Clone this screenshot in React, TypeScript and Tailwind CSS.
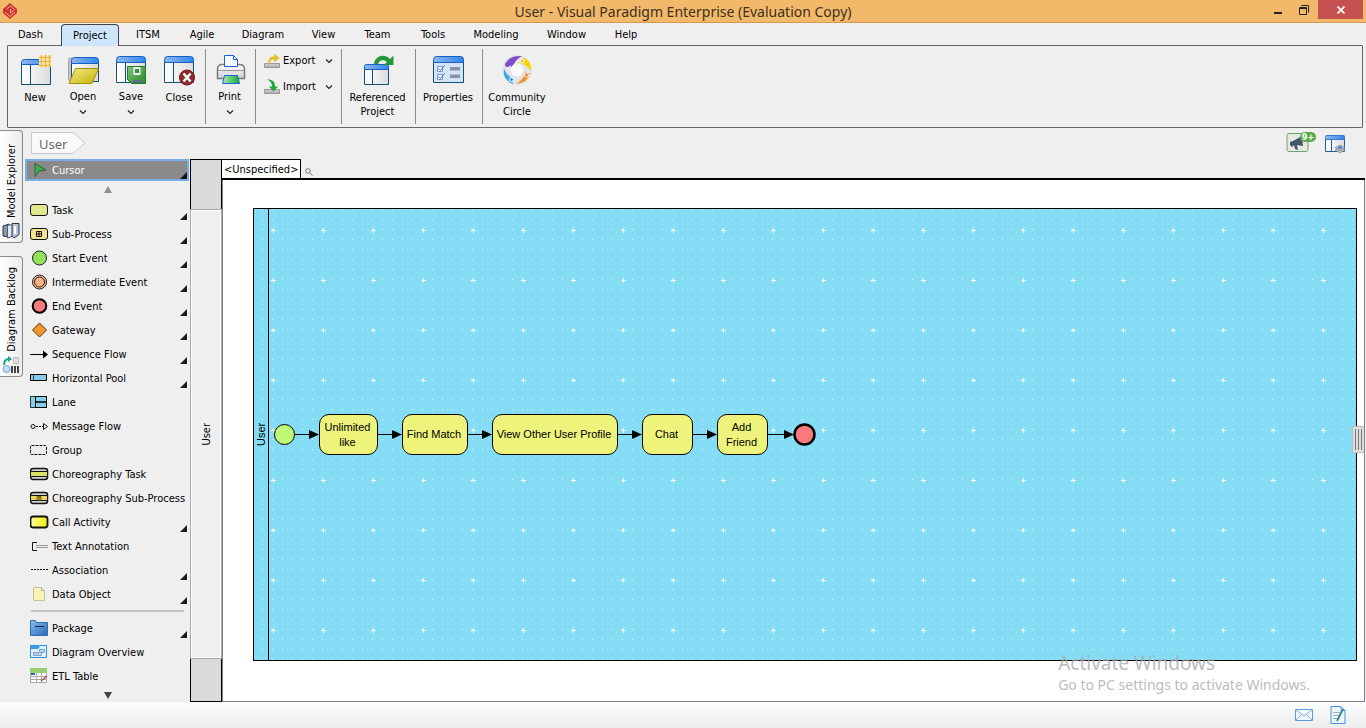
import type { ReactNode } from "react";

/* ---------- shared gradients ---------- */

function Gradients() {
  return (
    <svg className="absolute size-0" aria-hidden="true">
      <defs>
        <linearGradient id="bar" x1="0" x2="1" y1="0" y2="0">
          <stop offset="0" stopColor="#8fb8ee" />
          <stop offset="1" stopColor="#2f86ea" />
        </linearGradient>
        <linearGradient id="pane" x1="0" x2="1" y1="0" y2="0">
          <stop offset="0" stopColor="#ffffff" />
          <stop offset="1" stopColor="#dcdcdc" />
        </linearGradient>
        <linearGradient id="folder" x1="0" x2="1" y1="0" y2="1">
          <stop offset="0" stopColor="#f3e88c" />
          <stop offset="1" stopColor="#c9b400" />
        </linearGradient>
        <linearGradient id="green" x1="0" x2="1" y1="0" y2="0">
          <stop offset="0" stopColor="#a9e3b4" />
          <stop offset="1" stopColor="#12b32d" />
        </linearGradient>
        <linearGradient id="disk" x1="0" x2="1" y1="0" y2="1">
          <stop offset="0" stopColor="#7cc47a" />
          <stop offset="1" stopColor="#2c8a2c" />
        </linearGradient>
        <linearGradient id="tray" x1="0" x2="0" y1="0" y2="1">
          <stop offset="0" stopColor="#d6d6d6" />
          <stop offset="1" stopColor="#a8a8a8" />
        </linearGradient>
        <linearGradient id="blueBox" x1="0" x2="1" y1="0" y2="1">
          <stop offset="0" stopColor="#8cc0ee" />
          <stop offset="1" stopColor="#2566b4" />
        </linearGradient>
        <linearGradient id="call" x1="0" x2="1" y1="0" y2="0">
          <stop offset="0" stopColor="#f8fba0" />
          <stop offset="1" stopColor="#f2f200" />
        </linearGradient>
        <linearGradient id="chrome" x1="0" x2="0" y1="0" y2="1">
          <stop offset="0" stopColor="#ffffff" />
          <stop offset="1" stopColor="#d0d0d0" />
        </linearGradient>
      </defs>
    </svg>
  );
}

/* ---------- ribbon icons ---------- */

function Big({ children }: { children: ReactNode }) {
  return (
    <svg viewBox="0 0 32 32" className="size-8 shrink-0" fill="none" aria-hidden="true">
      {children}
    </svg>
  );
}

function WindowFrame() {
  return (
    <>
      <path d="M1.500 8.500h29v20h-29z" fill="url(#pane)" stroke="#135070" />
      <path d="M10.500 9v19" stroke="#135070" />
      <path d="M1.500 8.500v-3q0-3 3-3h23q3 0 3 3v3z" fill="url(#bar)" stroke="#1a5fc4" />
    </>
  );
}

const NewIcon = () => (
  <Big>
    <path d="M2.500 10.500h29v20h-29z" fill="url(#pane)" stroke="#135070" />
    <path d="M11.500 11v19" stroke="#135070" />
    <path d="M2.500 10.500v-2q0-3 3-3h26v5z" fill="url(#bar)" stroke="#1a5fc4" />
    <path d="M20 1h12v12h-12z" fill="#fdf3cf" />
    <path d="M20 3.500h12M20 7.500h12M20 11.500h12M22.500 1v12M26.500 1v12M30.500 1v12" stroke="#eeb53a" strokeWidth="1.500" />
  </Big>
);

const OpenIcon = () => (
  <Big>
    <path d="M1.500 26v-21q0-1 2-1h1v23z" fill="#c4c4c4" stroke="#a4a4a4" />
    <path d="M4.500 9.500h27v18h-27z" fill="url(#pane)" stroke="#135070" />
    <path d="M4.500 9.500v-3q0-3 3-3h21q3 0 3 3v3z" fill="url(#bar)" stroke="#1a5fc4" />
    <path d="M8.500 14.500h23l-6.500 15h-23z" fill="url(#folder)" stroke="#a39200" />
  </Big>
);

const SaveIcon = () => (
  <Big>
    <WindowFrame />
    <path d="M12.500 12.500h18v17h-14l-4-4z" fill="url(#disk)" stroke="#1c7d25" />
    <path d="M18.500 13h7v8h-7z" fill="#f4f4f4" />
    <path d="M20 15h4v4h-4z" fill="#3a8f3d" />
    <path d="M18 26h9v3h-9z" fill="#5c6f80" />
  </Big>
);

const CloseIcon = () => (
  <Big>
    <WindowFrame />
    <circle cx="24" cy="23.500" r="7.500" fill="#8b2b2b" stroke="#6d1519" />
    <path d="M20.500 19.500l7 8M27.500 19.500l-7 8" stroke="#fff" strokeWidth="2.500" />
  </Big>
);

const PrintIcon = () => (
  <Big>
    <path d="M3.500 24.500v-9q0-5 5-5h17q5 0 5 5v9z" fill="url(#chrome)" stroke="#7a7a7a" strokeWidth="1.500" />
    <path d="M10.500 12.500v-11h9l4 4v7z" fill="#f7fbff" stroke="#1d62d8" />
    <path d="M19.500 1.500v4h4" stroke="#1d62d8" />
    <path d="M4 16.500h26" stroke="#9a9a9a" />
    <path d="M9 17h16v4h-16z" fill="#e2e2e2" />
    <path d="M10.500 21.500h13l2 8h-17z" fill="url(#green)" stroke="#1d62d8" />
  </Big>
);

const ReferencedIcon = () => (
  <Big>
    <path d="M2.500 15.500h24v15h-24z" fill="url(#pane)" stroke="#135070" />
    <path d="M10.500 15v15" stroke="#135070" />
    <path d="M2.500 15.500v-3q0-2 2-2h20q2 0 2 2v3z" fill="url(#bar)" stroke="#1a5fc4" />
    <path d="M12 10c1-8 10-11 16-5l3.500-3.500v9.500h-10l3.500-3c-4-3-8-2-9 2.500z" fill="#27983a" />
  </Big>
);

const PropertiesIcon = () => (
  <Big>
    <path d="M1.500 8.500h30v20h-30z" fill="#d5e3f6" stroke="#135070" />
    <path d="M1.500 8.500v-3q0-3 3-3h24q3 0 3 3v3z" fill="url(#bar)" stroke="#1a5fc4" />
    <path d="M5.500 12.500h5v5h-5zM5.500 20.500h5v5h-5z" fill="#fff" stroke="#6f9be0" />
    <path d="M6.500 14.500l2 2 4-5M6.500 22.500l2 2 4-5" stroke="#3f72cc" />
    <path d="M18 13h10v3.500h-10zM18 20.500h10v3.500h-10z" fill="#8a92a6" />
  </Big>
);

const CommunityIcon = () => (
  <Big>
    <circle cx="16" cy="16" r="15" fill="#e3e3e8" />
    <path d="M5 9q4-8 16-7-8 4-10 13-1-5-6-6z" fill="#7e4fc8" />
    <path d="M22 3q9 4 8 14-5-7-12-8 5-1 4-6z" fill="#f7d404" />
    <path d="M29 19q-2 10-14 11 9-5 9-13 1 3 5 2z" fill="#ee9128" />
    <path d="M3 15q-2 10 9 15-1-2 1-5-6-2-10-10z" fill="#3aa9e6" />
    <circle cx="16" cy="16" r="6.500" fill="#fafafa" />
    <circle cx="6.500" cy="10.500" r="2.500" fill="#7e4fc8" />
    <circle cx="21" cy="7" r="2" fill="#e8b53a" stroke="#fff" />
    <circle cx="25.500" cy="21" r="2" fill="#e87a1c" stroke="#fff" />
    <circle cx="10.500" cy="25.500" r="2" fill="#2f8fe0" stroke="#fff" />
  </Big>
);

const ExportIcon = () => (
  <svg viewBox="0 0 16 16" className="size-4" aria-hidden="true">
    <path d="M.5 10.500h15v4h-15z" fill="url(#tray)" stroke="#999" />
    <path d="M4 11c0-5 2-7.500 6-7.500v-3l5.500 4.500-5.500 4.500v-3c-3 0-4 1-4 4.500z" fill="#e3c22e" />
  </svg>
);

const ImportIcon = () => (
  <svg viewBox="0 0 16 16" className="size-4" aria-hidden="true">
    <path d="M.5 10.500h15v4h-15z" fill="url(#tray)" stroke="#999" />
    <path d="M3 .5c6 0 8 2 8 7h3l-4.500 5-4.500-5h3c0-3-1-5-5-7z" fill="#22a53a" />
  </svg>
);

const Chevron = () => (
  <svg viewBox="0 0 8 6" className="h-1.5 w-2" fill="none" aria-hidden="true">
    <path d="M1 1.500l3 3 3-3" stroke="#222" strokeWidth="1.200" />
  </svg>
);

function RibbonButton({ icon, label, menu, className }: { icon: ReactNode; label: string; menu?: boolean; className: string }) {
  return (
    <button type="button" className={`flex shrink-0 flex-col items-center pt-2 text-center leading-[14px] ${className}`}>
      {icon}
      <span className={menu ? "mt-1" : "mt-[5px]"}>{label}</span>
      {menu && <span className="mt-[5px]"><Chevron /></span>}
    </button>
  );
}

function Divider() {
  return <div className="my-[3px] w-px shrink-0 bg-[#8c8c8c]" />;
}

/* ---------- palette icons (20 x 16) ---------- */

function Small({ children }: { children: ReactNode }) {
  return (
    <svg viewBox="0 0 20 16" className="h-4 w-5 shrink-0" fill="none" aria-hidden="true">
      {children}
    </svg>
  );
}

const PlainBox = ({ fill, width = 1 }: { fill: string; width?: number }) => (
  <rect x=".5" y="2.500" width="17" height="11" rx="2.500" fill={fill} stroke="#111" strokeWidth={width} />
);

const paletteIcons: Record<string, ReactNode> = {
  Task: <PlainBox fill="#e2e68c" />,
  "Sub-Process": <><PlainBox fill="#f5e48c" /><path d="M6.500 5.500h5v5h-5zM9 5.500v5M6.500 8h5" stroke="#111" /></>,
  "Start Event": <circle cx="9.500" cy="8" r="7" fill="#92e35b" stroke="#222" />,
  "Intermediate Event": <><circle cx="9.500" cy="8" r="7" fill="#f8b486" stroke="#222" /><circle cx="9.500" cy="8" r="5" stroke="#222" /></>,
  "End Event": <circle cx="9.500" cy="8" r="6.800" fill="#f47c7c" stroke="#000" strokeWidth="2" />,
  Gateway: <path d="M9.500 1l7 7-7 7-7-7z" fill="#f5952a" stroke="#553311" />,
  "Sequence Flow": <><path d="M0 8.500h14" stroke="#000" /><path d="M13 4.500l5 4-5 4z" fill="#000" /></>,
  "Horizontal Pool": <><path d="M.5 4.500h16v6h-16z" fill="#86cde8" stroke="#000" /><path d="M3.500 5v5" stroke="#345" /></>,
  Lane: <><path d="M.5 2.500h16v11h-16z" fill="#86cde8" stroke="#234" /><path d="M5.500 2.500h11v5.500h-11zM5.500 8h11v5.500h-11z" stroke="#000" /></>,
  "Message Flow": <><circle cx="3" cy="8.500" r="2" stroke="#111" /><path d="M6 8.500h7" stroke="#111" strokeDasharray="2 1" /><path d="M13.500 5.500l4 3-4 3z" fill="#fff" stroke="#111" /></>,
  Group: <rect x=".5" y="3.500" width="16" height="9" rx="1" fill="#ededed" stroke="#111" strokeDasharray="3 1" />,
  "Choreography Task": <><PlainBox fill="#d0d0d0" width={1.5} /><path d="M.5 5.500h17v5h-17z" fill="#d7e35e" stroke="#111" /></>,
  "Choreography Sub-Process": <><PlainBox fill="#d0d0d0" width={1.5} /><path d="M.5 5.500h17v5h-17z" fill="#f0d35c" stroke="#111" /><path d="M7 6.500h4v3.500h-4zM9 6.500v3.500M7 8h4" stroke="#7a6410" /></>,
  "Call Activity": <PlainBox fill="url(#call)" width={1.8} />,
  "Text Annotation": <><path d="M7 4.500h-4.500v8h4.500" stroke="#111" /><path d="M6 7.500h12M6 9.500h12" stroke="#999" /></>,
  Association: <path d="M1 7.500h17" stroke="#111" strokeDasharray="2 1" />,
  "Data Object": <><path d="M3.500 1.500h8l3 3v10h-11z" fill="#f9f2b0" stroke="#c2bfa5" /><path d="M11.500 1.500v3h3" fill="#fff" stroke="#aaa" /></>,
  Package: <><path d="M.5 15.500v-15h5l1 2h11v13z" fill="url(#blueBox)" stroke="#2c6fb0" /><path d="M5 6.500h9" stroke="#0c2548" /></>,
  "Diagram Overview": <><path d="M.5 1.500h16v12h-16z" fill="#e4f1fc" stroke="#2f8ee0" /><path d="M1 2h7l2 1-2 2h-7z" fill="#3a9bec" /><path d="M9.500 5.500h5v3h-5zM3.500 8.500h5v3h-5zM11.500 8.500v3h-3" fill="#b7d5ef" stroke="#7ba4cc" /></>,
  "ETL Table": <><path d="M.5 3.500h16v11h-16z" fill="#fff" stroke="#aaa" /><path d="M0 0h17v5h-17z" fill="#98cd74" /><path d="M1 8.500h15M1 11.500h15M6.500 5v10M11.500 5v10" stroke="#aaa" /><path d="M1 5h4v2h-4z" fill="#2565b0" /><path d="M11 13l6-5" stroke="#b34a4a" strokeWidth="1.300" /></>,
};

const Corner = () => (
  <svg viewBox="0 0 7 7" className="mb-0.5 mr-[3px] size-[7px] shrink-0 self-end" aria-hidden="true">
    <path d="M7 0v7H0z" fill="#1c1c1c" />
  </svg>
);

function PaletteItem({ name, menu }: { name: string; menu?: boolean }) {
  return (
    <button type="button" className="flex h-6 w-full shrink-0 items-center pl-[5px] text-left">
      <Small>{paletteIcons[name]}</Small>
      <span className="flex-1 whitespace-nowrap pl-0.5 pt-0.5">{name}</span>
      {menu && <Corner />}
    </button>
  );
}

const notations: [string, boolean][] = [
  ["Task", true],
  ["Sub-Process", true],
  ["Start Event", true],
  ["Intermediate Event", true],
  ["End Event", true],
  ["Gateway", true],
  ["Sequence Flow", true],
  ["Horizontal Pool", true],
  ["Lane", false],
  ["Message Flow", false],
  ["Group", false],
  ["Choreography Task", false],
  ["Choreography Sub-Process", false],
  ["Call Activity", true],
  ["Text Annotation", false],
  ["Association", true],
  ["Data Object", true],
];

const commons: [string, boolean][] = [
  ["Package", true],
  ["Diagram Overview", false],
  ["ETL Table", false],
];

/* ---------- window sections ---------- */

function TitleBar() {
  return (
    <header className="flex h-[23px] shrink-0 items-center border-b border-[#d29a55] bg-[#f3b96b]">
      <div className="w-28 pl-[3px]">
        <svg viewBox="0 0 14 16" className="h-4 w-3.5" aria-hidden="true">
          <path d="M7 0l7 6v4l-7 6-7-6v-4z" fill="#cf3333" />
          <path d="M3.500 6l4-3 4 3.500-4 3.500v-4M2 9l5 4.500 5-4.500" fill="none" stroke="#efb07a" />
        </svg>
      </div>
      <h1 className="flex-1 pt-px text-center font-['Noto_Sans',sans-serif] text-sm text-[#3c3020]">
        User - Visual Paradigm Enterprise (Evaluation Copy)
      </h1>
      <div className="flex w-28 items-start justify-end self-start">
        <button type="button" aria-label="Minimize" className="flex h-[19px] w-6 items-center justify-center">
          <svg viewBox="0 0 8 8" className="size-2"><path d="M0 6h8v2H0z" fill="#222" /></svg>
        </button>
        <button type="button" aria-label="Restore" className="flex h-[19px] w-7 items-center justify-center">
          <svg viewBox="0 0 10 10" className="size-2.5" fill="none" stroke="#222">
            <path d="M.5 2.500h7v7h-7zM0 3.500h8M2.500 .5h7v7" />
          </svg>
        </button>
        <button type="button" aria-label="Close" className="mr-[3px] flex h-[19px] w-[45px] items-center justify-center bg-[#c75050]">
          <svg viewBox="0 0 8 8" className="size-2"><path d="M.5 .5l7 7M7.500 .5l-7 7" stroke="#fff" strokeWidth="1.700" /></svg>
        </button>
      </div>
    </header>
  );
}

const tabs: [string, string][] = [
  ["Dash", "w-[61px]"],
  ["Project", "w-[58px]"],
  ["ITSM", "w-[58px]"],
  ["Agile", "w-[50px]"],
  ["Diagram", "w-[72px]"],
  ["View", "w-[49px]"],
  ["Team", "w-[59px]"],
  ["Tools", "w-[52px]"],
  ["Modeling", "w-[74px]"],
  ["Window", "w-[67px]"],
  ["Help", "w-[52px]"],
];

function Ribbon() {
  return (
    <>
      <nav className="flex h-[22px] shrink-0 items-end">
        {tabs.map(([name, width]) => (
          <button
            key={name}
            type="button"
            className={`${width} shrink-0 ${
              name === "Project"
                ? "relative -mb-px h-[22px] rounded-t-sm border border-b-0 border-[#444] bg-[#cfe5fc]"
                : "h-[21px]"
            }`}
          >
            {name}
          </button>
        ))}
      </nav>
      <section className="ml-[7px] mr-[3px] flex h-[83px] shrink-0 rounded-[1px] border border-[#666] pl-[3px]">
        <RibbonButton className="w-12" icon={<NewIcon />} label="New" />
        <RibbonButton className="w-12" icon={<OpenIcon />} label="Open" menu />
        <RibbonButton className="w-12" icon={<SaveIcon />} label="Save" menu />
        <RibbonButton className="mr-0.5 w-12" icon={<CloseIcon />} label="Close" />
        <Divider />
        <RibbonButton className="mr-0.5 w-[47px]" icon={<PrintIcon />} label="Print" menu />
        <Divider />
        <div className="flex w-[85px] shrink-0 flex-col px-2 pt-0.5">
          <button type="button" className="flex h-[26px] items-center gap-[3px]">
            <ExportIcon />
            <span className="flex-1 text-left">Export</span>
            <Chevron />
          </button>
          <button type="button" className="flex h-[26px] items-center gap-[3px]">
            <ImportIcon />
            <span className="flex-1 text-left">Import</span>
            <Chevron />
          </button>
        </div>
        <Divider />
        <RibbonButton className="mr-0.5 w-[71px]" icon={<ReferencedIcon />} label="Referenced Project" />
        <Divider />
        <RibbonButton className="mr-0.5 w-16" icon={<PropertiesIcon />} label="Properties" />
        <Divider />
        <RibbonButton className="w-[68px]" icon={<CommunityIcon />} label="Community Circle" />
      </section>
    </>
  );
}

function SideTab({ label, icon, className }: { label: string; icon: ReactNode; className: string }) {
  return (
    <button
      type="button"
      className={`flex w-[23px] flex-col items-center justify-end gap-1 rounded-r border border-l-0 border-[#888] bg-linear-to-r from-white to-[#ececec] pb-0.5 ${className}`}
    >
      <span className="rotate-180 whitespace-nowrap pr-0.5 [writing-mode:vertical-rl]">{label}</span>
      {icon}
    </button>
  );
}

function SideTabs() {
  return (
    <aside className="flex w-[25px] shrink-0 flex-col gap-[13px] pt-0.5">
      <SideTab
        label="Model Explorer"
        className="h-[113px]"
        icon={
          <svg viewBox="0 0 18 18" className="size-[18px]" fill="none">
            <path d="M1 4l6-2v13l-6-1z" fill="#8c98a6" stroke="#2c3540" />
            <path d="M5.500 3h6v11l-6 2z" fill="#dfe8f2" stroke="#4c5e70" />
            <path d="M10 1.500h7v11l-5 3.500-2-2z" fill="#b6c6d8" stroke="#2c3540" />
            <path d="M13 4v8" stroke="#fff" strokeWidth="2" />
          </svg>
        }
      />
      <SideTab
        label="Diagram Backlog"
        className="h-[121px]"
        icon={
          <svg viewBox="0 0 18 18" className="size-[18px]" fill="none">
            <path d="M2 9q0-6 5-6" stroke="#20a08a" strokeWidth="2" />
            <path d="M6 0l4 3-4 3z" fill="#20a08a" />
            <circle cx="4.500" cy="13" r="3.500" fill="#c2dcf5" stroke="#7aa2cf" />
            <path d="M11.500 1.500h5v6h-5zM14 1.500v6" stroke="#bbb" />
            <path d="M9 10h2v7h-2zM12 10h2v7h-2zM15 10h2v7h-2z" fill="#444" />
          </svg>
        }
      />
    </aside>
  );
}

function Breadcrumb() {
  return (
    <div className="flex h-[31px] shrink-0 items-start justify-between pl-1.5 pr-5 pt-1">
      <a href="#user" className="flex h-[22px] font-['Noto_Sans',sans-serif] text-[13px] leading-[22px] text-[#6a6a6a]">
        <span className="border border-r-0 border-[#c6cbd2] bg-[#fafafa] pl-[7px] pr-1.5">User</span>
        <svg viewBox="0 0 13 22" className="h-[22px] w-[13px]" aria-hidden="true">
          <path d="M0 .5l12 10.500-12 10.500" fill="#fafafa" stroke="#c6cbd2" />
        </svg>
      </a>
      <div className="flex gap-2">
        <button type="button" aria-label="News" className="relative h-[22px] w-[30px]">
          <svg viewBox="0 0 30 22" className="h-[22px] w-[30px]" fill="none">
            <rect x="1" y="1.500" width="21" height="18" rx="2" fill="#e6e8e6" stroke="#6fa56b" />
            <path d="M4 10l3-1 9-5 1 10-6-1 1 5-3-1-1-4-2 2-2-2z" fill="#475569" />
            <rect x="14" y="0" width="16" height="10" rx="5" fill="#57ab4c" />
          </svg>
          <span className="absolute right-0 top-0 w-4 text-center text-[9px] font-bold leading-[10px] text-white">9+</span>
        </button>
        <button type="button" aria-label="Switch diagram" className="h-[22px] w-[22px]">
          <svg viewBox="0 0 22 22" className="size-[22px]" fill="none">
            <path d="M1.500 7.500h19v12h-19z" fill="url(#pane)" stroke="#1d5f94" />
            <path d="M7.500 8v11" stroke="#1d5f94" />
            <path d="M1.500 7.500v-3q0-1 1-1h17q1 0 1 1v3z" fill="url(#bar)" stroke="#3a77cc" />
            <path d="M11 18l5-2.500 5 2.500-5 3z" fill="#bbb" stroke="#888" strokeWidth=".7" />
            <path d="M11 15.500l5-2.500 5 2.500-5 3z" fill="#b9c4d4" stroke="#888" strokeWidth=".7" />
            <path d="M14 14.500h4v2h-4z" fill="#3f78d8" />
          </svg>
        </button>
      </div>
    </div>
  );
}

function Palette() {
  return (
    <div className="flex w-[165px] shrink-0 flex-col">
      <button type="button" className="flex h-[22px] w-[164px] shrink-0 items-center border-2 border-[#78aee6] bg-[#8a8a8a] pl-[3px] text-white">
        <Small>
          <path d="M5 1.500l11 6.500-7 1-4 5.500z" fill="#35b24a" stroke="#3a5a3c" />
        </Small>
        <span className="flex-1 pl-0.5 pt-0.5 text-left">Cursor</span>
        <svg viewBox="0 0 7 7" className="size-[7px] self-end"><path d="M7 0v7H0z" fill="#111" /></svg>
      </button>
      <button type="button" aria-label="Scroll up" className="flex h-[17px] shrink-0 items-center justify-center">
        <svg viewBox="0 0 8 7" className="h-[7px] w-2"><path d="M4 0l4 7H0z" fill="#8f8f8f" /></svg>
      </button>
      {notations.map(([name, menu]) => <PaletteItem key={name} name={name} menu={menu} />)}
      <hr className="mx-1.5 my-1 h-0.5 shrink-0 border-0 bg-[#c6c6c6]" />
      {commons.map(([name, menu]) => <PaletteItem key={name} name={name} menu={menu} />)}
      <button type="button" aria-label="Scroll down" className="flex h-3.5 shrink-0 items-center justify-center">
        <svg viewBox="0 0 8 7" className="h-[7px] w-2"><path d="M4 7l4-7H0z" fill="#444" /></svg>
      </button>
    </div>
  );
}

function LaneStrip() {
  return (
    <div className="flex w-8 shrink-0 flex-col">
      <div className="h-[50px] shrink-0 border border-b-0 border-black bg-[#dadada]" />
      <div className="flex flex-1 items-center justify-center border border-[#a8a8a8] pl-0.5 outline-1 -outline-offset-2 outline-white">
        <span className="rotate-180 [writing-mode:vertical-rl]">User</span>
      </div>
      <div className="h-[43px] shrink-0 border border-t-0 border-black bg-[#dadada]" />
    </div>
  );
}

/* Node boxes and connectors, measured from the pool's inner corner. */
const nodes: { text: string; box: string }[] = [
  { text: "Unlimited like", box: "left-[65px] w-[59px]" },
  { text: "Find Match", box: "left-[148px] w-[66px]" },
  { text: "View Other User Profile", box: "left-[238px] w-[126px]" },
  { text: "Chat", box: "left-[388px] w-[51px]" },
  { text: "Add Friend", box: "left-[463px] w-[51px]" },
];

const flows: [number, number][] = [
  [41, 65],
  [124, 148],
  [214, 238],
  [364, 388],
  [439, 463],
  [514, 540],
];

function Pool() {
  return (
    <div className="relative flex-1 border border-black bg-[#85dcf5]">
      <svg className="absolute inset-0 size-full" aria-hidden="true">
        <defs>
          <pattern id="dots" x="8" y="0" width="10" height="10" patternUnits="userSpaceOnUse">
            <path d="M0 0h1v1h-1z" fill="#e0f7fe" />
          </pattern>
          <pattern id="marks" x="17" y="19" width="50" height="50" patternUnits="userSpaceOnUse">
            <path d="M2 0h1v5h-1zM0 2h5v1h-5z" fill="#f2fcff" />
          </pattern>
        </defs>
        <rect width="100%" height="100%" fill="url(#dots)" />
        <rect x="15" y="1" width="100%" height="100%" fill="url(#marks)" />
        <path d="M14.500 0v2000" stroke="#000" />
        {flows.map(([from, to]) => (
          <g key={from}>
            <path d={`M${from} 225.500H${to - 8}`} stroke="#000" />
            <path d={`M${to - 10} 221l10 4.500-10 4.500z`} fill="#000" />
          </g>
        ))}
        <circle cx="30.500" cy="225.500" r="10" fill="#c1f777" stroke="#000" />
        <circle cx="550.500" cy="225.500" r="10" fill="#f87a7a" stroke="#000" strokeWidth="2.500" />
      </svg>
      <span className="absolute left-0 top-[211px] h-[28px] w-[15px] rotate-180 text-center font-['Liberation_Sans',sans-serif] leading-[15px] [writing-mode:vertical-rl]">
        User
      </span>
      {nodes.map(({ text, box }) => (
        <div
          key={text}
          className={`absolute top-[205px] flex h-[41px] items-center justify-center rounded-[10px] border border-black bg-[#eef47b] pl-[3px] pr-[5px] text-center font-['Liberation_Sans',sans-serif] leading-[15px] ${box}`}
        >
          {text}
        </div>
      ))}
    </div>
  );
}

function Editor() {
  return (
    <main className="flex min-w-0 flex-1 flex-col pr-px">
      <div className="flex h-[21px] shrink-0 items-stretch border-b-2 border-black">
        <button type="button" className="border-r border-t border-black bg-white px-0.5 pt-px leading-4">
          &lt;Unspecified&gt;
        </button>
        <svg viewBox="0 0 8 8" className="mb-0.5 ml-1 size-2 self-end" fill="none" stroke="#777">
          <circle cx="3" cy="3" r="2.300" />
          <path d="M5 5l2.500 2.500" />
        </svg>
      </div>
      <div className="relative flex flex-1 border border-t-0 border-[#7f828a] bg-white pb-[40px] pl-[30px] pr-[7px] pt-7">
        <Pool />
        <div className="pointer-events-none absolute bottom-1.5 right-[54px] font-['Noto_Sans',sans-serif] text-[#a9adb0]">
          <p className="text-[19px] leading-6 opacity-80">Activate Windows</p>
          <p className="text-sm leading-5 opacity-80">Go to PC settings to activate Windows.</p>
        </div>
        <button
          type="button"
          aria-label="Show side panel"
          className="absolute right-0 top-[246px] flex h-[27px] w-3 items-center justify-center gap-0.5 border border-r-0 border-[#bbb] bg-[#dedede]"
        >
          <span className="h-[21px] w-px bg-[#777]" />
          <span className="h-[21px] w-px bg-[#777]" />
          <span className="h-[21px] w-px bg-[#777]" />
        </button>
      </div>
    </main>
  );
}

function StatusBar() {
  return (
    <footer className="flex h-[26px] shrink-0 items-center justify-end gap-[17px] bg-linear-to-b from-[#fbfcfc] to-[#eceeee] pr-5">
      <button type="button" aria-label="Messages">
        <svg viewBox="0 0 18 12" className="h-3 w-[18px]" fill="none" stroke="#5b9bdf">
          <path d="M.5 .5h17v11h-17z" fill="#f4f8fc" />
          <path d="M1 1l8 6 8-6M1 11l5-5M17 11l-5-5" strokeWidth=".8" />
        </svg>
      </button>
      <button type="button" aria-label="Notes">
        <svg viewBox="0 0 16 18" className="h-[18px] w-4" fill="none">
          <path d="M1 .5h10l4 4v13h-14z" fill="#eef5fc" stroke="#4c94de" />
          <path d="M11 .5v4h4" stroke="#4c94de" />
          <path d="M3 6.500h7M3 9.500h7M3 12.500h5" stroke="#aaa" />
          <path d="M13 3l-6 12" stroke="#1f8795" strokeWidth="1.700" />
        </svg>
      </button>
    </footer>
  );
}

export default function App() {
  return (
    <div className="flex h-screen min-h-[728px] flex-col bg-[#efefef] font-['DejaVu_Sans_Condensed','DejaVu_Sans',sans-serif] text-[11px] leading-[14px] text-black">
      <Gradients />
      <TitleBar />
      <Ribbon />
      <div className="flex min-h-0 flex-1">
        <SideTabs />
        <div className="flex min-w-0 flex-1 flex-col">
          <Breadcrumb />
          <div className="flex min-h-0 flex-1">
            <Palette />
            <LaneStrip />
            <Editor />
          </div>
        </div>
      </div>
      <StatusBar />
    </div>
  );
}
